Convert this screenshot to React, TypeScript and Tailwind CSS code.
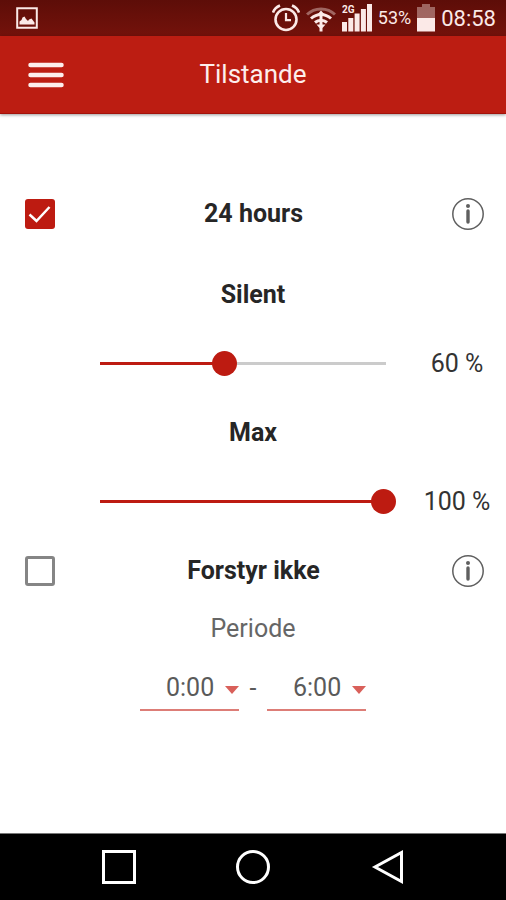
import clsx from "clsx";
import { useState } from "react";

const HOURS = Array.from({ length: 24 }, (_, i) => `${i}:00`);
const MIN_LEVEL = 29;
const MAX_LEVEL = 100;

function StatusBar() {
  return (
    <div className="h-9 pl-4 pr-[10px] flex items-center justify-between bg-linear-to-b from-[#5d0d08] to-[#74120b] text-[#fbe9e7]">
      <svg className="w-[22px] h-[22px]" viewBox="0 0 22 22">
        <path d="M1.2 1.2h19.600v19.600H1.200z" fill="none" stroke="currentColor" strokeWidth="2" />
        <path
          d="M3.500 17.500v-3l2-1.500 1-2.500 2-1 1.500 2.500 2 2 1-1.500 2.500-1 1.500 2 1.500 2v2z"
          fill="currentColor"
        />
      </svg>
      <div className="flex items-center gap-[6px]">
        <svg className="w-7 h-7" viewBox="0 0 28 28" fill="none" stroke="currentColor" strokeWidth="2.600">
          <circle cx="14" cy="15.500" r="10.500" />
          <path d="M14 9v7.200h5" strokeWidth="2.200" />
          <path d="M1 8.500C2 5.500 4.500 3 8 1.500M27 8.500C26 5.500 23.500 3 20 1.500" strokeWidth="2.600" />
        </svg>
        <svg className="w-[30px] h-7" viewBox="0 0 30 28" fill="none" stroke="currentColor">
          <path d="M1 10.500C8.500 3 21.500 3 29 10.500" strokeWidth="3" opacity="0.4" />
          <path d="M5 14.500C11 9 19 9 25 14.500" strokeWidth="3" />
          <path d="M9 18.500C12.500 15.500 17.500 15.500 21 18.500" strokeWidth="3" />
          <path d="M15 6.500l4.500 5h-9zM10.500 20.500h9l-3 3.500v3.500h-3V24z" fill="currentColor" stroke="none" />
          <path d="M15 10v12" strokeWidth="3" />
        </svg>
        <svg className="w-[30px] h-7" viewBox="0 0 30 28" fill="currentColor">
          <text x="0" y="9" fontSize="10" fontWeight="700" fontFamily="Roboto, sans-serif">
            2G
          </text>
          <path d="M0 18h5v9.500H0zM6.300 14h5v13.500h-5zM12.600 9.500h5v18h-5zM18.900 5h5v22.500h-5zM25 0h5v27.500h-5z" />
        </svg>
        <span className="text-lg">53%</span>
        <svg className="w-[18px] h-7" viewBox="0 0 18 28" fill="currentColor">
          <path d="M5 0h8v3h5v11H0V3h5z" opacity="0.4" />
          <path d="M0 14h18v13.500H0z" />
        </svg>
        <span className="text-[22px]">08:58</span>
      </div>
    </div>
  );
}

function ModeRow(props: { id: string; label: string; checked: boolean; onChange: (checked: boolean) => void }) {
  const { id, label, checked, onChange } = props;
  return (
    <div className="h-[69px] pl-[25px] pr-[22px] flex items-center justify-between">
      <div className="relative w-[30px] h-[30px]">
        <input
          id={id}
          type="checkbox"
          checked={checked}
          onChange={(e) => onChange(e.target.checked)}
          className={clsx(
            "block w-[30px] h-[30px] appearance-none rounded-[3px]",
            checked ? "bg-[#bd1b11]" : "border-[3px] border-[#858585]"
          )}
        />
        {checked && (
          <svg className="absolute left-0 top-0 w-[30px] h-[30px] pointer-events-none" viewBox="0 0 30 30">
            <path d="M4.500 15.500l7 6.500L24.500 8" fill="none" stroke="#fff" strokeWidth="2.500" />
          </svg>
        )}
      </div>
      <label htmlFor={id} className="text-[25px] font-bold text-[#262626]">
        {label}
      </label>
      <button type="button" aria-label={`Info: ${label}`} className="text-[#5f5f5f]">
        <svg className="w-8 h-8" viewBox="0 0 32 32">
          <circle cx="16" cy="16" r="15.200" fill="none" stroke="currentColor" strokeWidth="1.500" />
          <circle cx="16" cy="8" r="2" fill="currentColor" />
          <path d="M16 13v11" stroke="currentColor" strokeWidth="3.400" strokeLinecap="round" />
        </svg>
      </button>
    </div>
  );
}

function LevelSlider(props: { id: string; label: string; value: number; onChange: (value: number) => void }) {
  const { id, label, value, onChange } = props;
  const percent = ((value - MIN_LEVEL) / (MAX_LEVEL - MIN_LEVEL)) * 100;
  return (
    <div>
      <div className="h-[69px] flex items-center justify-center">
        <label htmlFor={id} className="text-[25px] font-bold text-[#262626]">
          {label}
        </label>
      </div>
      <div className="h-[69px] pl-[88px] flex items-center gap-3">
        <div className="relative flex-1 h-[26px]">
          <div className="absolute left-3 right-[10px] top-[11px] h-[3px] bg-[#cbcbcb]">
            <div className="h-full bg-[#bd1b11]" style={{ width: `${percent}%` }} />
          </div>
          <input
            id={id}
            type="range"
            min={MIN_LEVEL}
            max={MAX_LEVEL}
            value={value}
            onChange={(e) => onChange(Number(e.target.value))}
            className="relative block w-full h-[25px] appearance-none bg-transparent [&::-webkit-slider-thumb]:appearance-none [&::-webkit-slider-thumb]:w-[25px] [&::-webkit-slider-thumb]:h-[25px] [&::-webkit-slider-thumb]:rounded-full [&::-webkit-slider-thumb]:bg-[#bd1b11]"
          />
        </div>
        <output htmlFor={id} className="w-[98px] text-center text-[25px] text-[#333]">
          {value} %
        </output>
      </div>
    </div>
  );
}

function HourSelect(props: { label: string; value: string; onChange: (value: string) => void }) {
  const { label, value, onChange } = props;
  return (
    <div className="relative">
      <select
        aria-label={label}
        value={value}
        onChange={(e) => onChange(e.target.value)}
        className="block w-[99px] h-11 pl-[26px] appearance-none border-b-2 border-[#dd7d77] bg-transparent text-[25px] text-[#5a5a5a]"
      >
        {HOURS.map((hour) => (
          <option key={hour}>{hour}</option>
        ))}
      </select>
      <svg className="absolute right-0 top-[19px] w-[14px] h-2 pointer-events-none" viewBox="0 0 14 8">
        <path d="M0 0h14L7 8z" fill="#d9605a" />
      </svg>
    </div>
  );
}

export default function App() {
  const [allDay, setAllDay] = useState(true);
  const [doNotDisturb, setDoNotDisturb] = useState(false);
  const [silent, setSilent] = useState(60);
  const [max, setMax] = useState(100);
  const [from, setFrom] = useState("0:00");
  const [to, setTo] = useState("6:00");

  return (
    <div className="min-h-screen flex flex-col bg-white font-['Roboto',sans-serif]">
      <StatusBar />
      <header className="h-[78px] px-7 grid grid-cols-[36px_1fr_36px] items-center bg-[#bc1d12] text-[#fdeeec] border-b border-[#a3120a] shadow-[0_1px_3px_rgba(0,0,0,0.4)]">
        <button type="button" aria-label="Menu">
          <svg className="w-9 h-7" viewBox="0 0 36 28">
            <path
              d="M2.500 4h31M2.500 14h31M2.500 24h31"
              stroke="currentColor"
              strokeWidth="4.500"
              strokeLinecap="round"
            />
          </svg>
        </button>
        <h1 className="text-center text-[26px]">Tilstande</h1>
      </header>

      <main className="flex-1 pt-[65px]">
        <div className="mb-3">
          <ModeRow id="all-day" label="24 hours" checked={allDay} onChange={setAllDay} />
        </div>
        <LevelSlider id="silent" label="Silent" value={silent} onChange={setSilent} />
        <LevelSlider id="max" label="Max" value={max} onChange={setMax} />
        <ModeRow id="do-not-disturb" label="Forstyr ikke" checked={doNotDisturb} onChange={setDoNotDisturb} />
        <div className="h-12 flex items-center justify-center text-[25px] text-[#666]">Periode</div>
        <div className="mt-[14px] flex items-center justify-center text-[25px] text-[#5a5a5a]">
          <HourSelect label="Fra" value={from} onChange={setFrom} />
          <span className="w-7 text-center">-</span>
          <HourSelect label="Til" value={to} onChange={setTo} />
        </div>
      </main>

      <nav className="h-[67px] px-[100px] flex items-center justify-between bg-black border-t border-[#777] text-white">
        <button type="button" aria-label="Recent apps">
          <svg className="w-9 h-9" viewBox="0 0 36 36" fill="none" stroke="currentColor" strokeWidth="3">
            <path d="M3.500 2.500h31v31h-31z" />
          </svg>
        </button>
        <button type="button" aria-label="Home">
          <svg className="w-9 h-9" viewBox="0 0 36 36" fill="none" stroke="currentColor" strokeWidth="3">
            <circle cx="18" cy="18" r="15.500" />
          </svg>
        </button>
        <button type="button" aria-label="Back">
          <svg className="w-9 h-9" viewBox="0 0 36 36" fill="none" stroke="currentColor" strokeWidth="3">
            <path d="M31.500 3.500v29L5 18z" />
          </svg>
        </button>
      </nav>
    </div>
  );
}
